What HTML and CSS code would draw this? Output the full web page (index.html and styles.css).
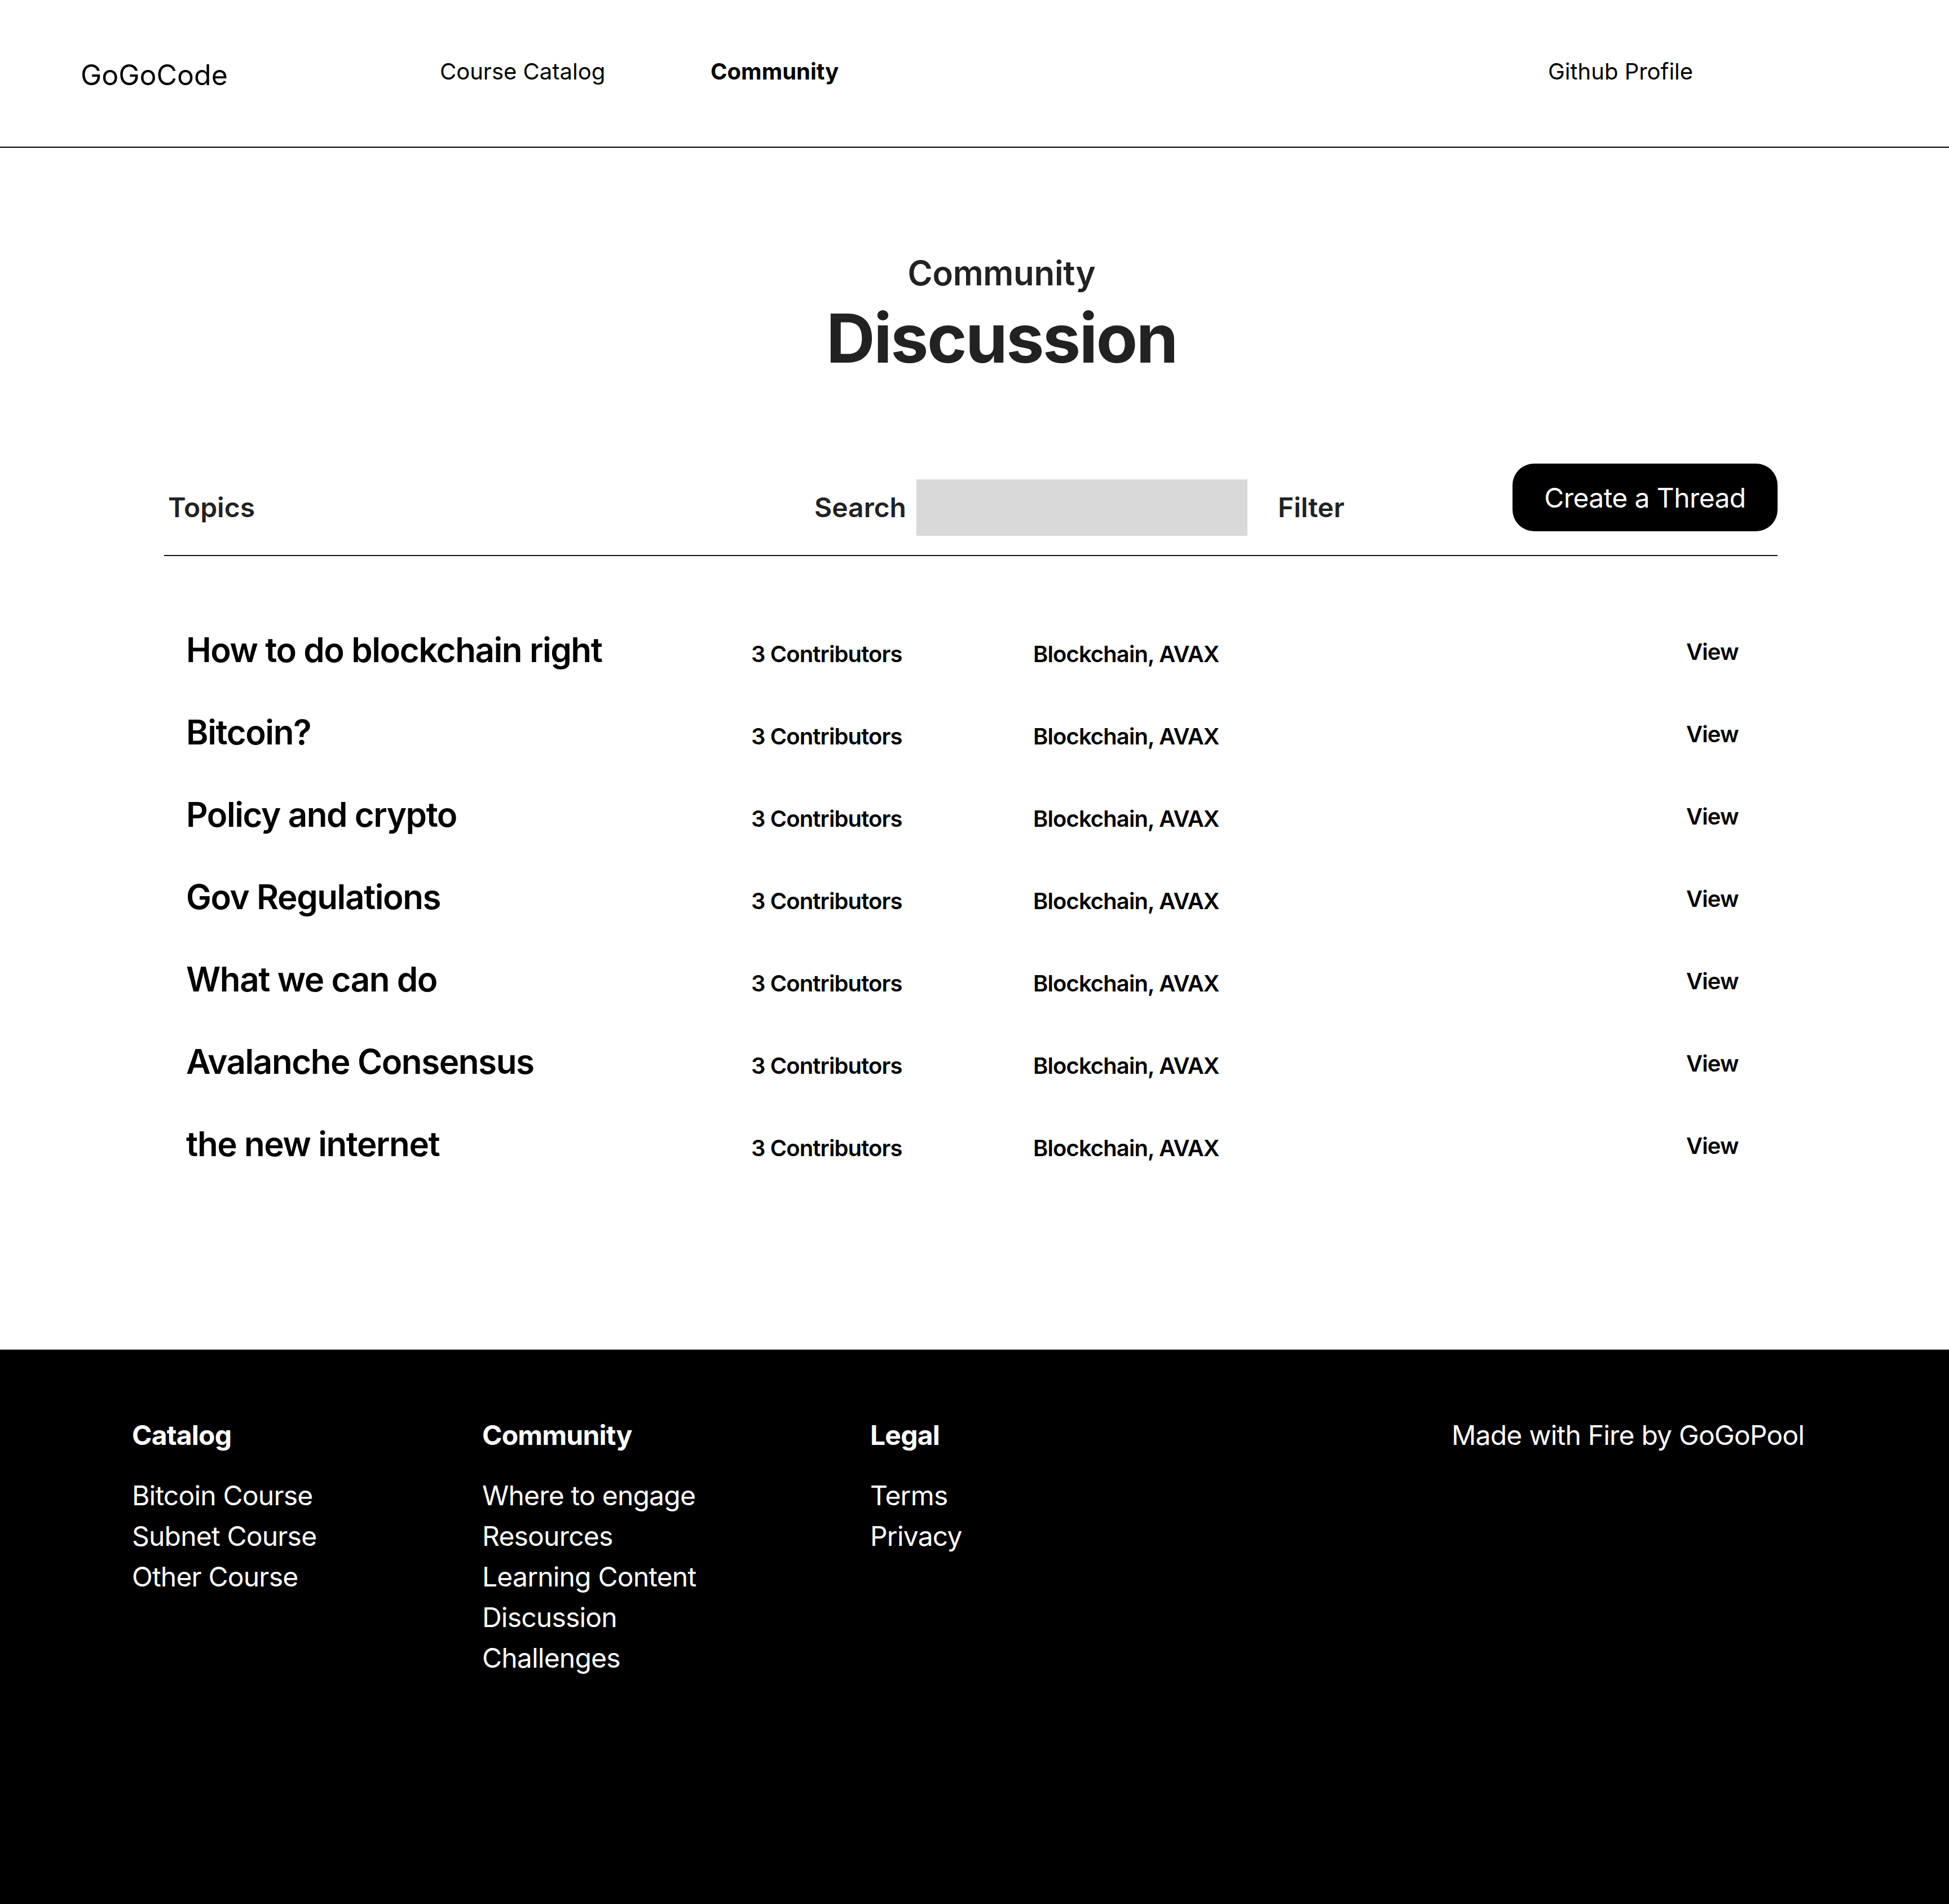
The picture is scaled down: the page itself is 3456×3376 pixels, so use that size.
FILE: index.html
```html
<!DOCTYPE html>
<html lang="en">
<head>
<meta charset="utf-8">
<title>GoGoCode – Community Discussion</title>
<link rel="stylesheet" href="styles.css">
</head>
<body>
<header class="site-header">
  <div class="logo">GoGoCode</div>
  <a class="nav-link" href="#">Course Catalog</a>
  <a class="nav-link nav-active" href="#">Community</a>
  <a class="nav-link" href="#">Github Profile</a>
</header>

<main class="main">
  <div class="page-title">
    <div class="eyebrow">Community</div>
    <h1 class="title">Discussion</h1>
  </div>

  <section class="board">
    <div class="toolbar">
      <div class="tool-label topics">Topics</div>
      <div class="tool-label search-label">Search</div>
      <input class="search-input" type="text" aria-label="Search">
      <div class="tool-label filter">Filter</div>
      <button class="create-btn" type="button">Create a Thread</button>
    </div>

    <div class="threads">
      <div class="thread"><div class="t-title">How to do blockchain right</div><div class="t-meta">3 Contributors</div><div class="t-meta">Blockchain, AVAX</div><a class="t-view" href="#">View</a></div>
      <div class="thread"><div class="t-title">Bitcoin?</div><div class="t-meta">3 Contributors</div><div class="t-meta">Blockchain, AVAX</div><a class="t-view" href="#">View</a></div>
      <div class="thread"><div class="t-title">Policy and crypto</div><div class="t-meta">3 Contributors</div><div class="t-meta">Blockchain, AVAX</div><a class="t-view" href="#">View</a></div>
      <div class="thread"><div class="t-title">Gov Regulations</div><div class="t-meta">3 Contributors</div><div class="t-meta">Blockchain, AVAX</div><a class="t-view" href="#">View</a></div>
      <div class="thread"><div class="t-title">What we can do</div><div class="t-meta">3 Contributors</div><div class="t-meta">Blockchain, AVAX</div><a class="t-view" href="#">View</a></div>
      <div class="thread"><div class="t-title">Avalanche Consensus</div><div class="t-meta">3 Contributors</div><div class="t-meta">Blockchain, AVAX</div><a class="t-view" href="#">View</a></div>
      <div class="thread"><div class="t-title">the new internet</div><div class="t-meta">3 Contributors</div><div class="t-meta">Blockchain, AVAX</div><a class="t-view" href="#">View</a></div>
    </div>
  </section>
</main>

<footer class="site-footer">
  <div class="f-col">
    <div class="f-head">Catalog</div>
    <ul class="f-list">
      <li>Bitcoin Course</li>
      <li>Subnet Course</li>
      <li>Other Course</li>
    </ul>
  </div>
  <div class="f-col">
    <div class="f-head">Community</div>
    <ul class="f-list">
      <li>Where to engage</li>
      <li>Resources</li>
      <li>Learning Content</li>
      <li>Discussion</li>
      <li>Challenges</li>
    </ul>
  </div>
  <div class="f-col">
    <div class="f-head">Legal</div>
    <ul class="f-list">
      <li>Terms</li>
      <li>Privacy</li>
    </ul>
  </div>
  <div class="f-col">
    <div class="f-made">Made with Fire by GoGoPool</div>
  </div>
</footer>
</body>
</html>
```

FILE: styles.css
```css
* { box-sizing: border-box; }

html, body {
  margin: 0;
  padding: 0;
  background: #ffffff;
  font-family: Inter, "Noto Sans", "Liberation Sans", sans-serif;
  color: #000;
}

a { color: inherit; text-decoration: none; }

/* Header */
.site-header {
  height: 262px;
  border-bottom: 2px solid #000;
  display: grid;
  grid-template-columns: 637px 480px 1485px auto;
  align-items: start;
  padding-left: 143px;
}
.logo {
  font-size: 50px;
  line-height: 1;
  font-weight: 400;
  padding-top: 108px;
}
.nav-link {
  font-size: 40px;
  line-height: 1;
  font-weight: 400;
  padding-top: 107px;
}
.nav-active { font-weight: 700; }

/* Main */
.main {
  padding-top: 192px;
  padding-bottom: 249px;
}
.page-title {
  text-align: center;
  padding-left: 96px;
  color: #222;
}
.eyebrow {
  font-size: 60px;
  line-height: 1;
  font-weight: 600;
  letter-spacing: -0.3px;
}
.title {
  margin: 26px 0 0;
  font-size: 120px;
  line-height: 1;
  font-weight: 700;
  letter-spacing: -2.5px;
}

.board {
  margin: 0 304px 0 291px;
}
.toolbar {
  margin-top: 162px;
  display: flex;
  align-items: center;
  padding: 0 0 6px 7px;
  border-bottom: 2px solid #111;
}
.tool-label {
  font-size: 48px;
  line-height: 1;
  font-weight: 600;
  color: #222;
}
.topics { flex: 1; }
.search-label { width: 181px; }
.search-input {
  width: 587px;
  height: 100px;
  border: 0;
  margin: 0;
  padding: 0;
  background: #d9d9d9;
  outline: none;
}
.filter {
  margin-left: 54px;
  width: 416px;
}
.create-btn {
  width: 470px;
  height: 120px;
  margin-bottom: 36px;
  border: 0;
  border-radius: 38px;
  background: #000;
  color: #fff;
  font-family: inherit;
  font-size: 48px;
  font-weight: 400;
  letter-spacing: -0.6px;
  padding: 0;
}

.threads {
  padding-top: 136px;
}
.thread {
  height: 146px;
  display: grid;
  grid-template-columns: 1002px 500px 1158px auto;
  align-items: baseline;
  padding-left: 39px;
}
.t-title {
  font-size: 60px;
  line-height: 1;
  font-weight: 600;
  letter-spacing: -1.4px;
}
.t-meta {
  font-size: 40px;
  line-height: 1;
  font-weight: 600;
  letter-spacing: -0.9px;
}
.t-view {
  font-size: 40px;
  line-height: 1;
  font-weight: 600;
  letter-spacing: -0.9px;
  position: relative;
  top: -4px;
}

/* Footer */
.site-footer {
  background: #000;
  color: #fff;
  height: 983px;
  display: grid;
  grid-template-columns: 621px 688px 1031px auto;
  padding: 128px 0 0 234px;
  align-items: start;
}
.f-head {
  font-size: 48px;
  line-height: 1;
  font-weight: 700;
  letter-spacing: -0.8px;
}
.f-list {
  list-style: none;
  margin: 47px 0 0;
  padding: 0;
  font-size: 48px;
  line-height: 72px;
  font-weight: 400;
  letter-spacing: -0.8px;
}
.f-made {
  font-size: 48px;
  line-height: 1;
  font-weight: 400;
  letter-spacing: -0.8px;
}
```
